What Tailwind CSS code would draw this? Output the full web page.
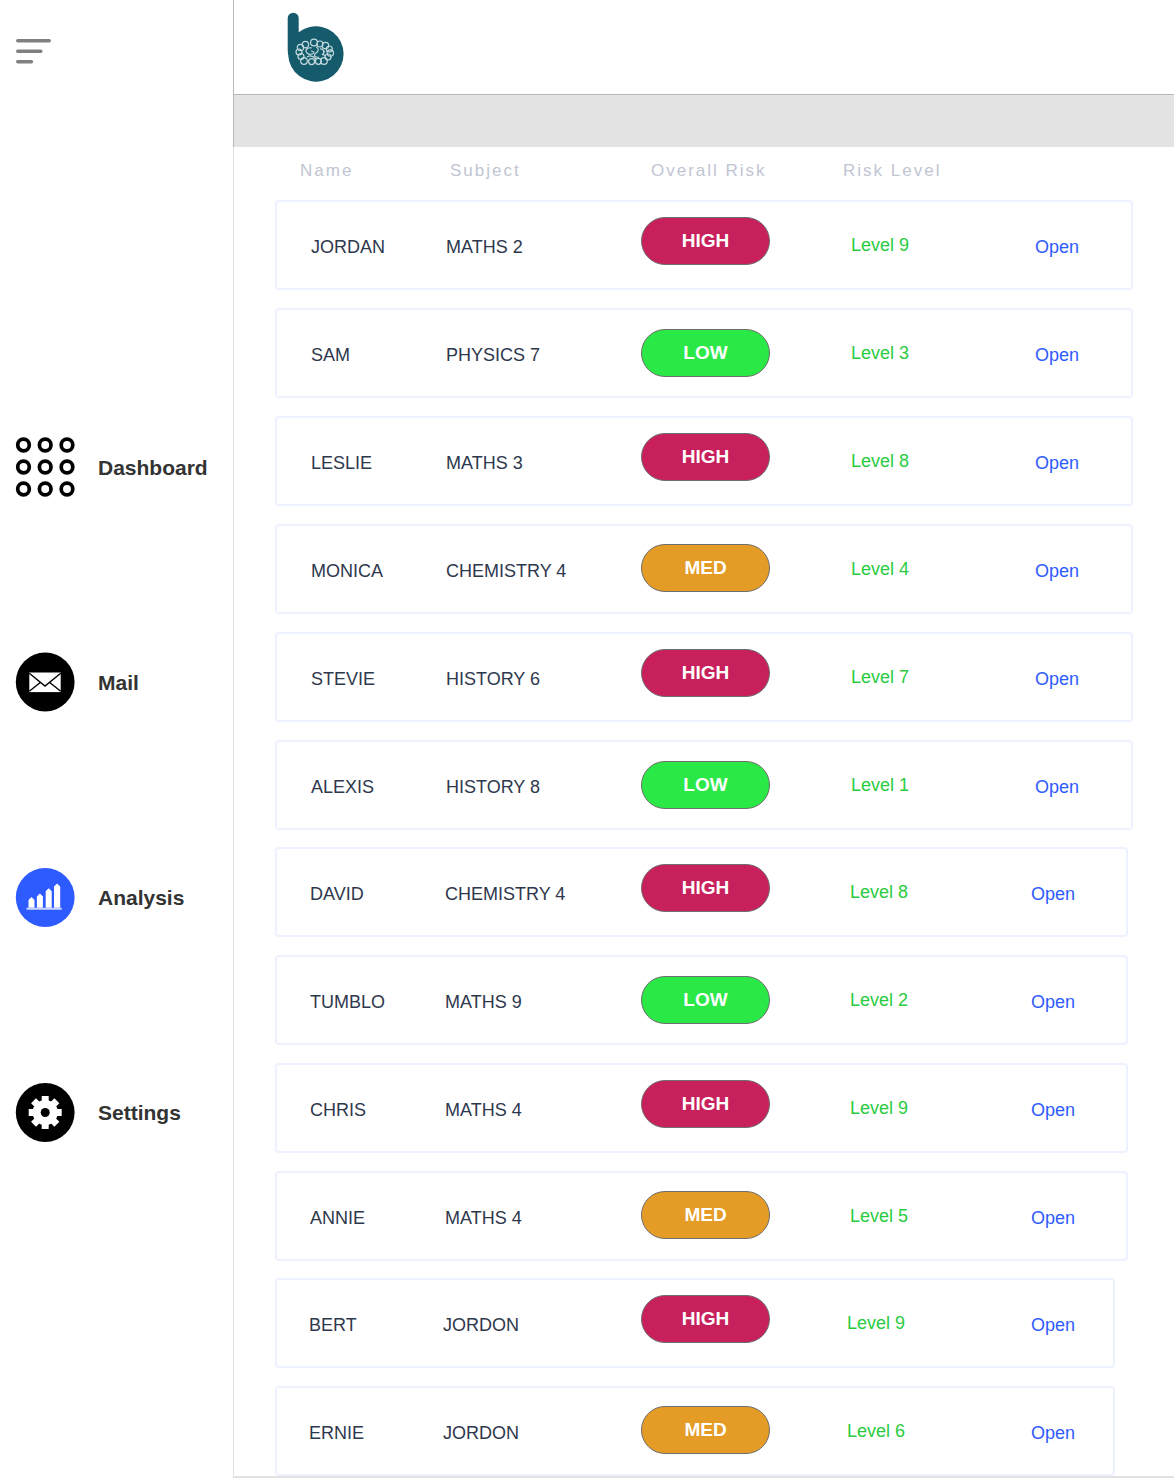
<!DOCTYPE html>
<html lang="en">
<head>
<meta charset="utf-8">
<meta name="viewport" content="width=device-width, initial-scale=1">
<title>Analysis</title>
<script src="https://cdn.jsdelivr.net/npm/@tailwindcss/browser@4"></script>
</head>
<body class="flex min-h-screen bg-white font-['Liberation_Sans',Arial,sans-serif] text-lg text-[#2e384d]">
<aside class="w-[233px] shrink-0 pl-4">
  <button type="button" aria-label="Menu" class="mt-[38px] block h-[27px]">
    <svg width="36" height="27" viewBox="0 0 36 27" stroke="#808080" stroke-width="3.6" stroke-linecap="round"><path d="M1.8 2.7H33.2M1.8 13.2H24.8M1.8 23.7H15.4"/></svg>
  </button>
  <nav class="mt-[372px]">
    <ul class="flex flex-col gap-[156px] text-[21px] font-bold text-[#333333]">
      <li><a href="#dashboard" class="flex items-center gap-[23px]">
        <svg class="overflow-visible" width="59" height="59" viewBox="0 0 59 59" fill="none" stroke="#000" stroke-width="3.7"><circle cx="7.5" cy="8" r="5.8"/><circle cx="29.2" cy="8" r="5.8"/><circle cx="51" cy="8" r="5.8"/><circle cx="7.5" cy="30" r="5.8"/><circle cx="29.2" cy="30" r="5.8"/><circle cx="51" cy="30" r="5.8"/><circle cx="7.5" cy="52" r="5.8"/><circle cx="29.2" cy="52" r="5.8"/><circle cx="51" cy="52" r="5.8"/></svg>
        <span class="pt-1">Dashboard</span></a></li>
      <li><a href="#mail" class="flex items-center gap-[23px]">
        <svg class="overflow-visible" width="59" height="59" viewBox="0 0 59 59"><g transform="translate(-.3 .5)"><circle cx="29.5" cy="29.5" r="29.4"/><path fill="#fff" d="M13.6 20h31.4v19.6H13.6z"/><path d="M13.6 20.8 29.3 33.6 45 20.8M13.6 38.8 24.6 30M45 38.8 34 30" fill="none" stroke="#000" stroke-width="1.4"/></g></svg>
        <span class="pt-1">Mail</span></a></li>
      <li><a href="#analysis" aria-current="page" class="flex items-center gap-[23px]">
        <svg class="overflow-visible" width="59" height="59" viewBox="0 0 59 59"><g transform="translate(-.3 1)"><circle cx="29.5" cy="29.5" r="29.4" fill="#2e5bff"/><path fill="#fff" d="M12.8 39.8V32l3-3 3 3v7.8zM21.2 39.8V28.4l3-3 3 3v11.4zM30 39.8V23.2l3-3 3 3v16.6zM38.3 39.8V18.5l3.1-3 3.1 3v21.3z"/><path fill="#c9d4ff" d="M10.8 39.8h35.2v2H10.800z"/></g></svg>
        <span class="pt-1">Analysis</span></a></li>
      <li><a href="#settings" class="flex items-center gap-[23px]">
        <svg class="overflow-visible" width="59" height="59" viewBox="0 0 59 59"><g transform="translate(-.3 1)"><circle cx="29.5" cy="29.5" r="29.4"/><g transform="translate(29.5 29.5)" fill="#fff"><circle r="12.6"/><path id="tooth" d="M-3.5-16.500h7v6h-7z"/><use href="#tooth" transform="rotate(45)"/><use href="#tooth" transform="rotate(90)"/><use href="#tooth" transform="rotate(135)"/><use href="#tooth" transform="rotate(180)"/><use href="#tooth" transform="rotate(225)"/><use href="#tooth" transform="rotate(270)"/><use href="#tooth" transform="rotate(315)"/><circle r="4.5" fill="#000"/></g></g></svg>
        <span class="pt-1">Settings</span></a></li>
    </ul>
  </nav>
</aside>
<main class="flex min-w-0 grow flex-col">
  <header class="border-b border-l border-[#b8b8b8] pt-3 pb-3 pl-[53px]">
    <svg role="img" aria-label="b" width="58" height="70" viewBox="0 0 58 70"><path fill="#155b6b" d="M.7 6.2a5.500 5.500 0 0 1 11 0v14A27.700 27.700 0 1 1 1.200 43C.8 40 .7 38 .7 36z"/>
      <g fill="none" stroke="#c3dadf" stroke-width="1.200"><circle cx="43.300" cy="41" r="3.200"/><circle cx="41" cy="45" r="3"/><circle cx="37" cy="49" r="3.300"/><circle cx="31.400" cy="49.300" r="3"/><circle cx="24.600" cy="49.600" r="3"/><circle cx="17" cy="49" r="3.300"/><circle cx="14" cy="44.500" r="3"/><circle cx="12" cy="40" r="3"/><circle cx="13.500" cy="35.500" r="3.200"/><circle cx="18.400" cy="32.600" r="3.200"/><circle cx="27" cy="30.500" r="3.400"/><circle cx="33" cy="32" r="3"/><circle cx="38.500" cy="33.500" r="3.200"/><circle cx="42.300" cy="37" r="3"/><path d="M25 36c-4-1-6 1-6 3s3 4 6 3 2-3-1-3M29 35c3 1 3 4 0 6s-1 5 3 4M33 37c4-1 5 4 2 6M20 45c3-2 6-1 9 2M38 39c-2 1-2 4 0 5"/></g></svg>
  </header>
  <div class="h-[52px] border-l border-[#b8b8b8] bg-[#e3e3e3]"></div>
  <section class="grow border-b-2 border-l border-[#e2e2e2] pr-[41px] pl-[41px]">
    <table class="block">
      <thead class="block h-[53px] text-left text-[17px] leading-[48px] tracking-[2px] text-[#bfc5d2]">
        <tr class="grid grid-cols-[150px_201px_192px_1fr] pl-[25px]"><th scope="col" class="font-normal">Name</th><th scope="col" class="font-normal">Subject</th><th scope="col" class="font-normal">Overall Risk</th><th scope="col" class="font-normal">Risk Level</th></tr>
      </thead>
      <tbody id="group-a" class="flex flex-col gap-[18px]"></tbody>
      <tbody id="group-b" class="mt-[17px] mr-[5px] flex flex-col gap-[18px]"></tbody>
      <tbody id="group-c" class="mt-[17px] mr-[18px] flex flex-col gap-[18px]"></tbody>
    </table>
  </section>
</main>
<script>
  const pill = {
    HIGH: 'mt-[15px] bg-[#c8205c]',
    MED: 'mt-[18px] bg-[#e49c26]',
    LOW: 'mt-[19px] bg-[#2ae846]',
  };
  const groups = {
    'group-a': {
      row: 'grid-cols-[135px_195px_210px_1fr_auto] pl-[34px] pr-[52px]',
      data: [['JORDAN', 'MATHS 2', 'HIGH', 9], ['SAM', 'PHYSICS 7', 'LOW', 3], ['LESLIE', 'MATHS 3', 'HIGH', 8], ['MONICA', 'CHEMISTRY 4', 'MED', 4], ['STEVIE', 'HISTORY 6', 'HIGH', 7], ['ALEXIS', 'HISTORY 8', 'LOW', 1]],
    },
    'group-b': {
      row: 'grid-cols-[135px_196px_209px_1fr_auto] pl-[33px] pr-[51px]',
      data: [['DAVID', 'CHEMISTRY 4', 'HIGH', 8], ['TUMBLO', 'MATHS 9', 'LOW', 2], ['CHRIS', 'MATHS 4', 'HIGH', 9], ['ANNIE', 'MATHS 4', 'MED', 5]],
    },
    'group-c': {
      row: 'grid-cols-[134px_198px_206px_1fr_auto] pl-[32px] pr-[38px]',
      data: [['BERT', 'JORDON', 'HIGH', 9], ['ERNIE', 'JORDON', 'MED', 6]],
    },
  };
  for (const [id, group] of Object.entries(groups)) {
    document.getElementById(id).innerHTML = group.data.map(([name, subject, risk, level]) => `
      <tr class="grid h-[90px] items-center rounded-sm border-2 border-[#eef2fe] ${group.row}">
        <td class="pt-1">${name}</td>
        <td class="pt-1">${subject}</td>
        <td class="self-start"><span class="flex h-12 w-[129px] items-center justify-center rounded-full border border-[#6e6e6e] text-[19px] font-bold text-white ${pill[risk]}">${risk}</span></td>
        <td class="text-[#29cc41]">Level ${level}</td>
        <td class="pt-1"><a href="#open" class="text-[#2e5bff]">Open</a></td>
      </tr>`).join('');
  }
</script>
</body>
</html>
